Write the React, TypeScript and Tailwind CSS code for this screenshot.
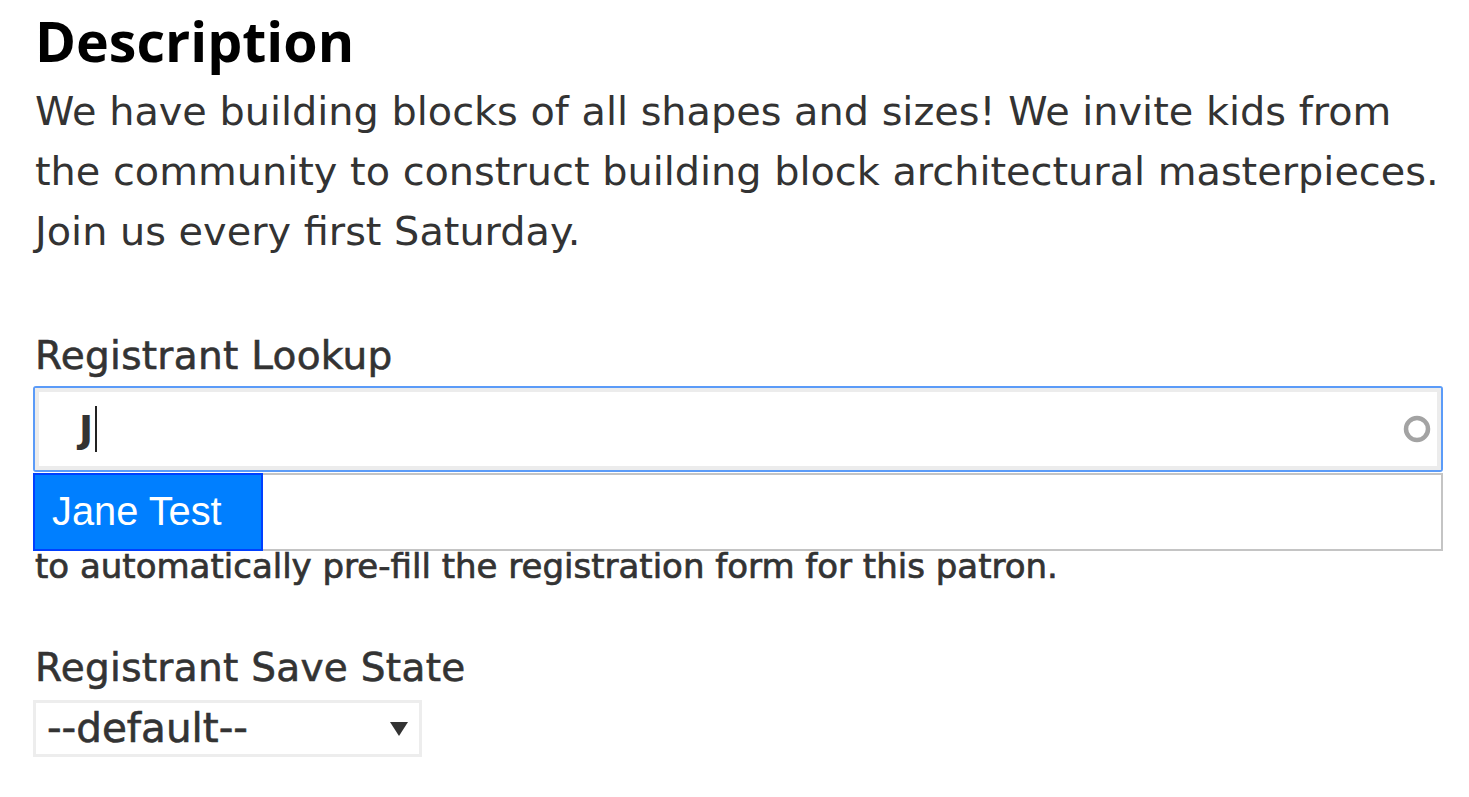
import { useState } from 'react';

const body = { fontFamily: '"DejaVu Sans", "Liberation Sans", sans-serif' };

function Spinner() {
  return (
    <svg width="32" height="32" viewBox="0 0 32 32" className="absolute right-[8px] top-1/2 -translate-y-1/2 blur-[0.6px]">
      <circle cx="16" cy="16" r="11" fill="none" stroke="#a3a3a3" strokeWidth="4.5" />
    </svg>
  );
}

function Caret() {
  return (
    <svg width="20" height="16" viewBox="0 0 20 16">
      <path d="M1 1 H19 L10 15 Z" fill="#333" />
    </svg>
  );
}

export default function App() {
  const [query] = useState('J');

  return (
    <div className="min-h-screen bg-white text-[#333]" style={body}>
      <div className="pl-[35px] pt-[9px]">
        <div className="w-[1430px]">
          {/* Description */}
          <h2
            className="h-[64px] text-[55.5px] font-bold leading-[64px] text-black"
            style={{ fontFamily: '"Open Sans", "Liberation Sans", sans-serif' }}
          >
            Description
          </h2>
          <p className="mt-[8px] text-[39.8px] leading-[60px] text-[#333]">
            We have building blocks of all shapes and sizes! We invite kids from the community to construct
            building block architectural masterpieces. Join us every first Saturday.
          </p>

          {/* Registrant lookup */}
          <div className="mt-[70px]">
            <label className="block text-[39px] leading-[50px] tracking-[0.3px] text-[#333] [-webkit-text-stroke:0.6px_#333]">
              Registrant Lookup
            </label>
            <div className="relative mt-[5px] -ml-[2px] w-[1410px]">
              <div className="relative h-[86px] rounded-[3px] border-2 border-[#5b9bf8] bg-white">
                <div className="absolute inset-0 border-[4px] border-[#ececec]" />
                <div className="relative flex h-full items-center pl-[44px] text-[38px] font-bold text-[#333]">
                  <span>{query}</span>
                  <span className="ml-[2px] h-[46px] w-[2px] bg-[#222]" />
                </div>
                <Spinner />
              </div>

              {/* Autocomplete list */}
              <div className="absolute left-0 right-0 top-[87px] z-10 flex h-[78px] border-y-2 border-r-2 border-[#c4c4c4] bg-white">
                <div
                  className="-my-[2px] flex h-[78px] w-[230px] items-center border-2 border-[#0040ff] bg-[#007fff] pl-[17px] text-[39.8px] text-white"
                  style={{ fontFamily: '"Liberation Sans", Arial, sans-serif' }}
                >
                  Jane Test
                </div>
              </div>

              <p className="mt-[28px] pl-[2px] text-[34px] leading-[44px] text-[#333] [-webkit-text-stroke:0.7px_#333]">
                Select a patron from the list
                <br />
                to automatically pre-fill the registration form for this patron.
              </p>
            </div>
          </div>

          {/* Save state */}
          <div className="mt-[55px]">
            <label className="block text-[39px] leading-[50px] tracking-[0.3px] text-[#333] [-webkit-text-stroke:0.6px_#333]">
              Registrant Save State
            </label>
            <div className="-ml-[2px] mt-[7px] flex h-[57px] w-[389px] items-center justify-between border-[3px] border-[#ededed] bg-white pl-[11px] pr-[10px]">
              <span className="text-[40.5px] leading-none text-[#333] [-webkit-text-stroke:0.6px_#333]">--default--</span>
              <Caret />
            </div>
          </div>
        </div>
      </div>
    </div>
  );
}
